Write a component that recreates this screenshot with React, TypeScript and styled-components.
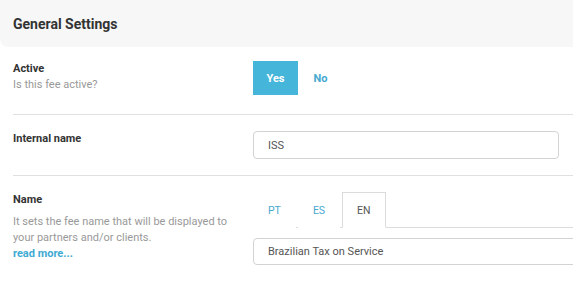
import React from 'react';
import styled, { createGlobalStyle } from 'styled-components';

const GlobalStyle = createGlobalStyle`
	html, body {
		margin: 0;
		padding: 0;
		background: #fff;
		overflow: hidden;
	}
	body {
		font-family: Roboto, 'Liberation Sans', Arial, sans-serif;
		color: #333;
	}
`;

const StyledPanel = styled.div`
	width: 640px;
`;

const StyledHeader = styled.div`
	height: 47px;
	display: flex;
	align-items: center;
	padding-left: 13px;
	background: #f7f7f7;
	border-bottom-left-radius: 8px;
	h2 {
		margin: 0;
		font-size: 14px;
		font-weight: 700;
		color: #333;
	}
`;

const StyledRows = styled.div`
	margin-left: 13px;
`;

const StyledRow = styled.div<{ $last?: boolean }>`
	display: grid;
	grid-template-columns: 240px 1fr;
	padding: 14px 0 19px;
	border-bottom: ${(p) => (p.$last ? 'none' : '1px solid #e0e0e0')};
	&:nth-child(n + 2) {
		padding: 16px 0 16px;
	}
`;

const StyledLabel = styled.div`
	font-size: 11px;
	line-height: 16px;
	font-weight: 700;
	color: #333;
`;

const StyledHint = styled.p<{ $gap?: number }>`
	margin: ${(p) => p.$gap ?? 0}px 0 0;
	max-width: 218px;
	font-size: 11px;
	line-height: 16px;
	color: #999;
`;

const StyledMore = styled.a`
	display: block;
	font-size: 11px;
	line-height: 16px;
	font-weight: 700;
	color: #3eaad3;
	text-decoration: none;
`;

const StyledToggle = styled.div`
	display: flex;
	align-items: center;
`;

const StyledOption = styled.button<{ $active?: boolean }>`
	height: 34px;
	width: 45px;
	border: none;
	padding: 0;
	font-family: inherit;
	font-size: 11px;
	font-weight: 700;
	background: ${(p) => (p.$active ? '#46b5da' : 'transparent')};
	color: ${(p) => (p.$active ? '#fff' : '#46a9d2')};
`;

const StyledInput = styled.input<{ $wide?: boolean }>`
	box-sizing: border-box;
	width: ${(p) => (p.$wide ? '360px' : '306px')};
	height: ${(p) => (p.$wide ? '27px' : '28px')};
	padding: 0 14px;
	border: 1px solid #d3d3d3;
	border-radius: 4px;
	font-family: inherit;
	font-size: 11px;
	color: #555;
	outline: none;
`;

const StyledTabs = styled.div`
	display: flex;
	border-bottom: 1px solid #dcdcdc;
	margin-bottom: 10px;
`;

const StyledTab = styled.div<{ $active?: boolean }>`
	height: 34px;
	padding: 0 14px;
	margin-right: 2px;
	margin-bottom: -1px;
	display: flex;
	align-items: center;
	font-size: 10.5px;
	color: ${(p) => (p.$active ? '#555' : '#4aa8d0')};
	background: #fff;
	border: 1px solid ${(p) => (p.$active ? '#dcdcdc' : 'transparent')};
	border-bottom-color: ${(p) => (p.$active ? '#fff' : 'transparent')};
`;

const languages = ['PT', 'ES', 'EN'];

export default function App() {
	return (
		<StyledPanel>
			<GlobalStyle />
			<StyledHeader>
				<h2>General Settings</h2>
			</StyledHeader>
			<StyledRows>
				<StyledRow>
					<div>
						<StyledLabel>Active</StyledLabel>
						<StyledHint>Is this fee active?</StyledHint>
					</div>
					<StyledToggle>
						<StyledOption $active>Yes</StyledOption>
						<StyledOption>No</StyledOption>
					</StyledToggle>
				</StyledRow>
				<StyledRow>
					<StyledLabel>Internal name</StyledLabel>
					<div>
						<StyledInput defaultValue="ISS" />
					</div>
				</StyledRow>
				<StyledRow $last>
					<div>
						<StyledLabel>Name</StyledLabel>
						<StyledHint $gap={6}>
							It sets the fee name that will be displayed to your partners
							and/or clients.
						</StyledHint>
						<StyledMore href="#">read more...</StyledMore>
					</div>
					<div>
						<StyledTabs>
							{languages.map((lang) => (
								<StyledTab key={lang} $active={lang === 'EN'}>
									{lang}
								</StyledTab>
							))}
						</StyledTabs>
						<StyledInput $wide defaultValue="Brazilian Tax on Service" />
					</div>
				</StyledRow>
			</StyledRows>
		</StyledPanel>
	);
}
